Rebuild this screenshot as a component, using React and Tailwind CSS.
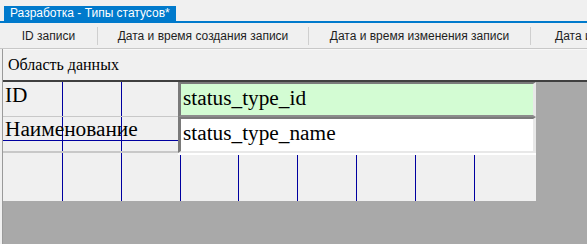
import React from "react";

const cols = [60, 59, 59, 58, 59, 59, 59, 59];

export default function App() {
  return (
    <div className="w-[587px] h-[244px] overflow-hidden bg-[#f0f0f0] flex flex-col" style={{ fontFamily: '"Liberation Sans", Arial, sans-serif' }}>
      {/* tab strip */}
      <div className="h-[23px] pl-[4px] pt-[6px] border-b-2 border-[#007acc] flex items-end shrink-0">
        <div className="h-[15px] bg-[#007acc] text-white text-[12px] leading-[15px] px-[6px] whitespace-nowrap">
          Разработка - Типы статусов*
        </div>
      </div>
      {/* column header row */}
      <div className="h-[25px] flex items-center text-[12px] text-[#1e1e1e] whitespace-nowrap shrink-0 overflow-hidden">
        <div className="w-[97px] shrink-0 text-center">ID записи</div>
        <div className="w-[211px] shrink-0 text-center border-l border-[#cfcfcf] h-[18px] leading-[18px]">Дата и время создания записи</div>
        <div className="w-[222px] shrink-0 text-center border-l border-[#cfcfcf] h-[18px] leading-[18px]">Дата и время изменения записи</div>
        <div className="w-[80px] shrink-0 pl-[24px] border-l border-[#cfcfcf] h-[18px] leading-[18px]">Дата и время</div>
      </div>
      <div className="h-[1px] bg-[#c8c8c8] shrink-0" />
      {/* design panel */}
      <div className="flex-1 ml-[2px] border-l border-[#9a9a9a] flex flex-col min-h-0">
        <div className="h-[1px] bg-[#f8f8f8] shrink-0" />
        <div className="h-[30px] pl-[5px] text-[16px] leading-[30px] text-black shrink-0" style={{ fontFamily: '"Liberation Serif", "Times New Roman", serif' }}>
          Область данных
        </div>
        <div className="h-[2px] bg-[#404040] shrink-0" />
        <div className="flex-1 bg-[#a9a9a9] min-h-0">
          <div className="relative w-[533px] h-[119px] bg-[#f0f0f0]">
            {/* grid lines */}
            <div className="absolute inset-0 flex">
              {cols.map((w, i) => (
                <div key={i} className="h-full shrink-0 border-r border-[#0000a0]" style={{ width: w }} />
              ))}
            </div>
            {/* form controls */}
            <div className="relative flex flex-col" style={{ fontFamily: '"Liberation Serif", "Times New Roman", serif' }}>
              <div className="flex h-[35px]">
                <div className="w-[175px] border-b border-[#c8c8c8] text-[21.3px] leading-[26px] pl-[2px] text-black">ID</div>
                <div className="flex-1 bg-[#d3fcd3] border-t-2 border-l-[3px] border-[#7a7a7a] border-r-[3px] border-r-[#e8e8e8] border-b-2 border-b-[#8c8c8c] text-[21.3px] leading-[28px] pl-[2px] text-black whitespace-nowrap">
                  status_type_id
                </div>
              </div>
              <div className="flex h-[38px]">
                <div className="w-[175px] flex flex-col">
                  <div className="h-[24px] border-b border-[#0000a0] text-[21.3px] leading-[24px] pl-[2px] text-black whitespace-nowrap">Наименование</div>
                  <div className="h-[12px] border-b-2 border-[#c8c8c8] w-[176px]" />
                </div>
                <div className="flex-1 flex flex-col bg-white">
                  <div className="flex-1 bg-white border-t-2 border-l-[3px] border-[#7a7a7a] border-r-[3px] border-r-[#e8e8e8] border-b-2 border-b-[#e8e8e8] text-[21.3px] leading-[28px] pl-[2px] text-black whitespace-nowrap">
                    status_type_name
                  </div>
                  <div className="h-[2px] bg-white" />
                </div>
              </div>
            </div>
          </div>
        </div>
      </div>
    </div>
  );
}
